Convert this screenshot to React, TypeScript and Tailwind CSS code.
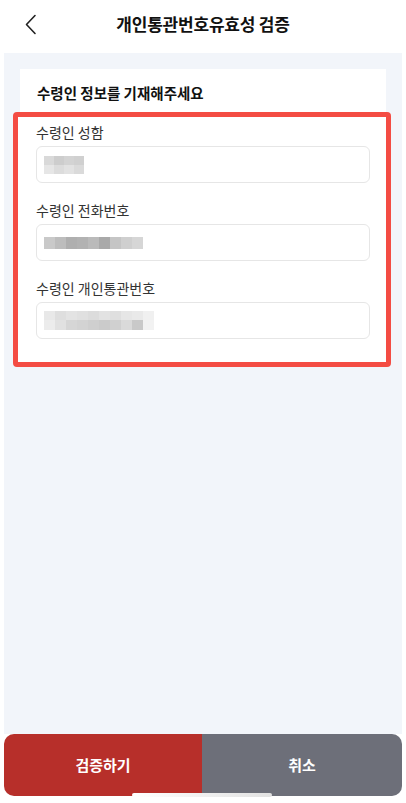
import React from "react";

const nameTop = ["bg-[#d9d9d9]", "bg-[#cdcdcd]", "bg-[#d3d3d3]", "bg-[#d0d0d0]"];
const nameBot = ["bg-[#e6e6e6]", "bg-[#dcdcdc]", "bg-[#e2e2e2]", "bg-[#dadada]"];
const phone = ["bg-[#c9c9c9]", "bg-[#bdbdbd]", "bg-[#afafaf]", "bg-[#b2b2b2]", "bg-[#bababa]", "bg-[#a9a9a9]", "bg-[#c5c5c5]", "bg-[#cfcfcf]", "bg-[#d6d6d6]"];
const idTop = ["bg-[#e8e8e8]", "bg-[#dedede]", "bg-[#e3e3e3]", "bg-[#e0e0e0]", "bg-[#dcdcdc]", "bg-[#e2e2e2]", "bg-[#dfdfdf]", "bg-[#e6e6e6]", "bg-[#e9e9e9]", "bg-[#f0f0f0]"];
const idBot = ["bg-[#ececec]", "bg-[#e1e1e1]", "bg-[#d6d6d6]", "bg-[#d3d3d3]", "bg-[#cfcfcf]", "bg-[#cbcbcb]", "bg-[#d0d0d0]", "bg-[#dadada]", "bg-[#c9c9c9]", "bg-[#f2f2f2]"];

function Row({ cells, h, w }: { cells: string[]; h: string; w: string }) {
  return (
    <div className="flex">
      {cells.map((c, i) => (
        <div key={i} className={`${c} ${h} ${w}`} />
      ))}
    </div>
  );
}

function Field({ label, children, first }: { label: string; children: React.ReactNode; first?: boolean }) {
  return (
    <div className={first ? "" : "mt-[17px]"}>
      <div className="text-[14px] leading-[20px] text-[#333]">{label}</div>
      <div className="mt-[4px] h-[37px] rounded-[6px] border border-[#e6e6e6] bg-white flex items-center pl-[7px]">
        {children}
      </div>
    </div>
  );
}

export default function App() {
  return (
    <div
      className="w-[406px] h-[803px] bg-white flex flex-col overflow-hidden relative"
      style={{ fontFamily: '"Noto Sans CJK KR", "Noto Sans", sans-serif' }}
    >
      {/* Header */}
      <div className="h-[53px] shrink-0 relative flex items-center justify-center">
        <svg className="absolute left-[24px] top-[14px]" width="14" height="22" viewBox="0 0 14 22" fill="none">
          <path d="M11 1.5 L2.5 10.5 L11 19.5" stroke="#222" strokeWidth="1.6" strokeLinecap="round" strokeLinejoin="round" />
        </svg>
        <div className="text-[17px] font-bold text-[#111] tracking-[-0.2px] -mt-[6px]">개인통관번호유효성 검증</div>
      </div>

      {/* Body */}
      <div className="mx-[4px] flex-1 bg-[#f2f5fa] flex flex-col">
        <div className="mt-[16px] mx-[16px] bg-white pt-[14px]">
          <div className="pl-[17px] text-[14.5px] leading-[20px] font-bold text-[#111]">수령인 정보를 기재해주세요</div>
          <div className="mt-[9px] ml-[-7px] mr-[-5px] border-[5px] border-[#f44c43] rounded-[4px] bg-white pl-[18px] pr-[16px] pt-[5px] pb-[23px]">
            <Field label="수령인 성함" first>
              <div className="flex flex-col">
                <Row cells={nameTop} h="h-[9px]" w="w-[10px]" />
                <Row cells={nameBot} h="h-[9px]" w="w-[10px]" />
              </div>
            </Field>
            <Field label="수령인 전화번호">
              <div className="flex flex-col">
                <Row cells={phone} h="h-[12px]" w="w-[11px]" />
              </div>
            </Field>
            <Field label="수령인 개인통관번호">
              <div className="flex flex-col">
                <Row cells={idTop} h="h-[9px]" w="w-[11px]" />
                <Row cells={idBot} h="h-[10px]" w="w-[11px]" />
              </div>
            </Field>
          </div>
        </div>
      </div>

      {/* Buttons */}
      <div className="mx-[4px] h-[62px] shrink-0 flex rounded-[10px] overflow-hidden bg-[#f2f5fa]">
        <button className="w-[198px] bg-[#b72f2a] text-white text-[15px] font-bold flex items-center justify-center">검증하기</button>
        <button className="flex-1 bg-[#6d6f79] text-white text-[15px] font-bold flex items-center justify-center">취소</button>
      </div>
      <div className="h-[7px] shrink-0 bg-white" />
      <div className="absolute left-[132px] top-[793px] w-[140px] h-[4px] rounded-full bg-gradient-to-r from-white to-[#e2e2e2]" />
    </div>
  );
}
